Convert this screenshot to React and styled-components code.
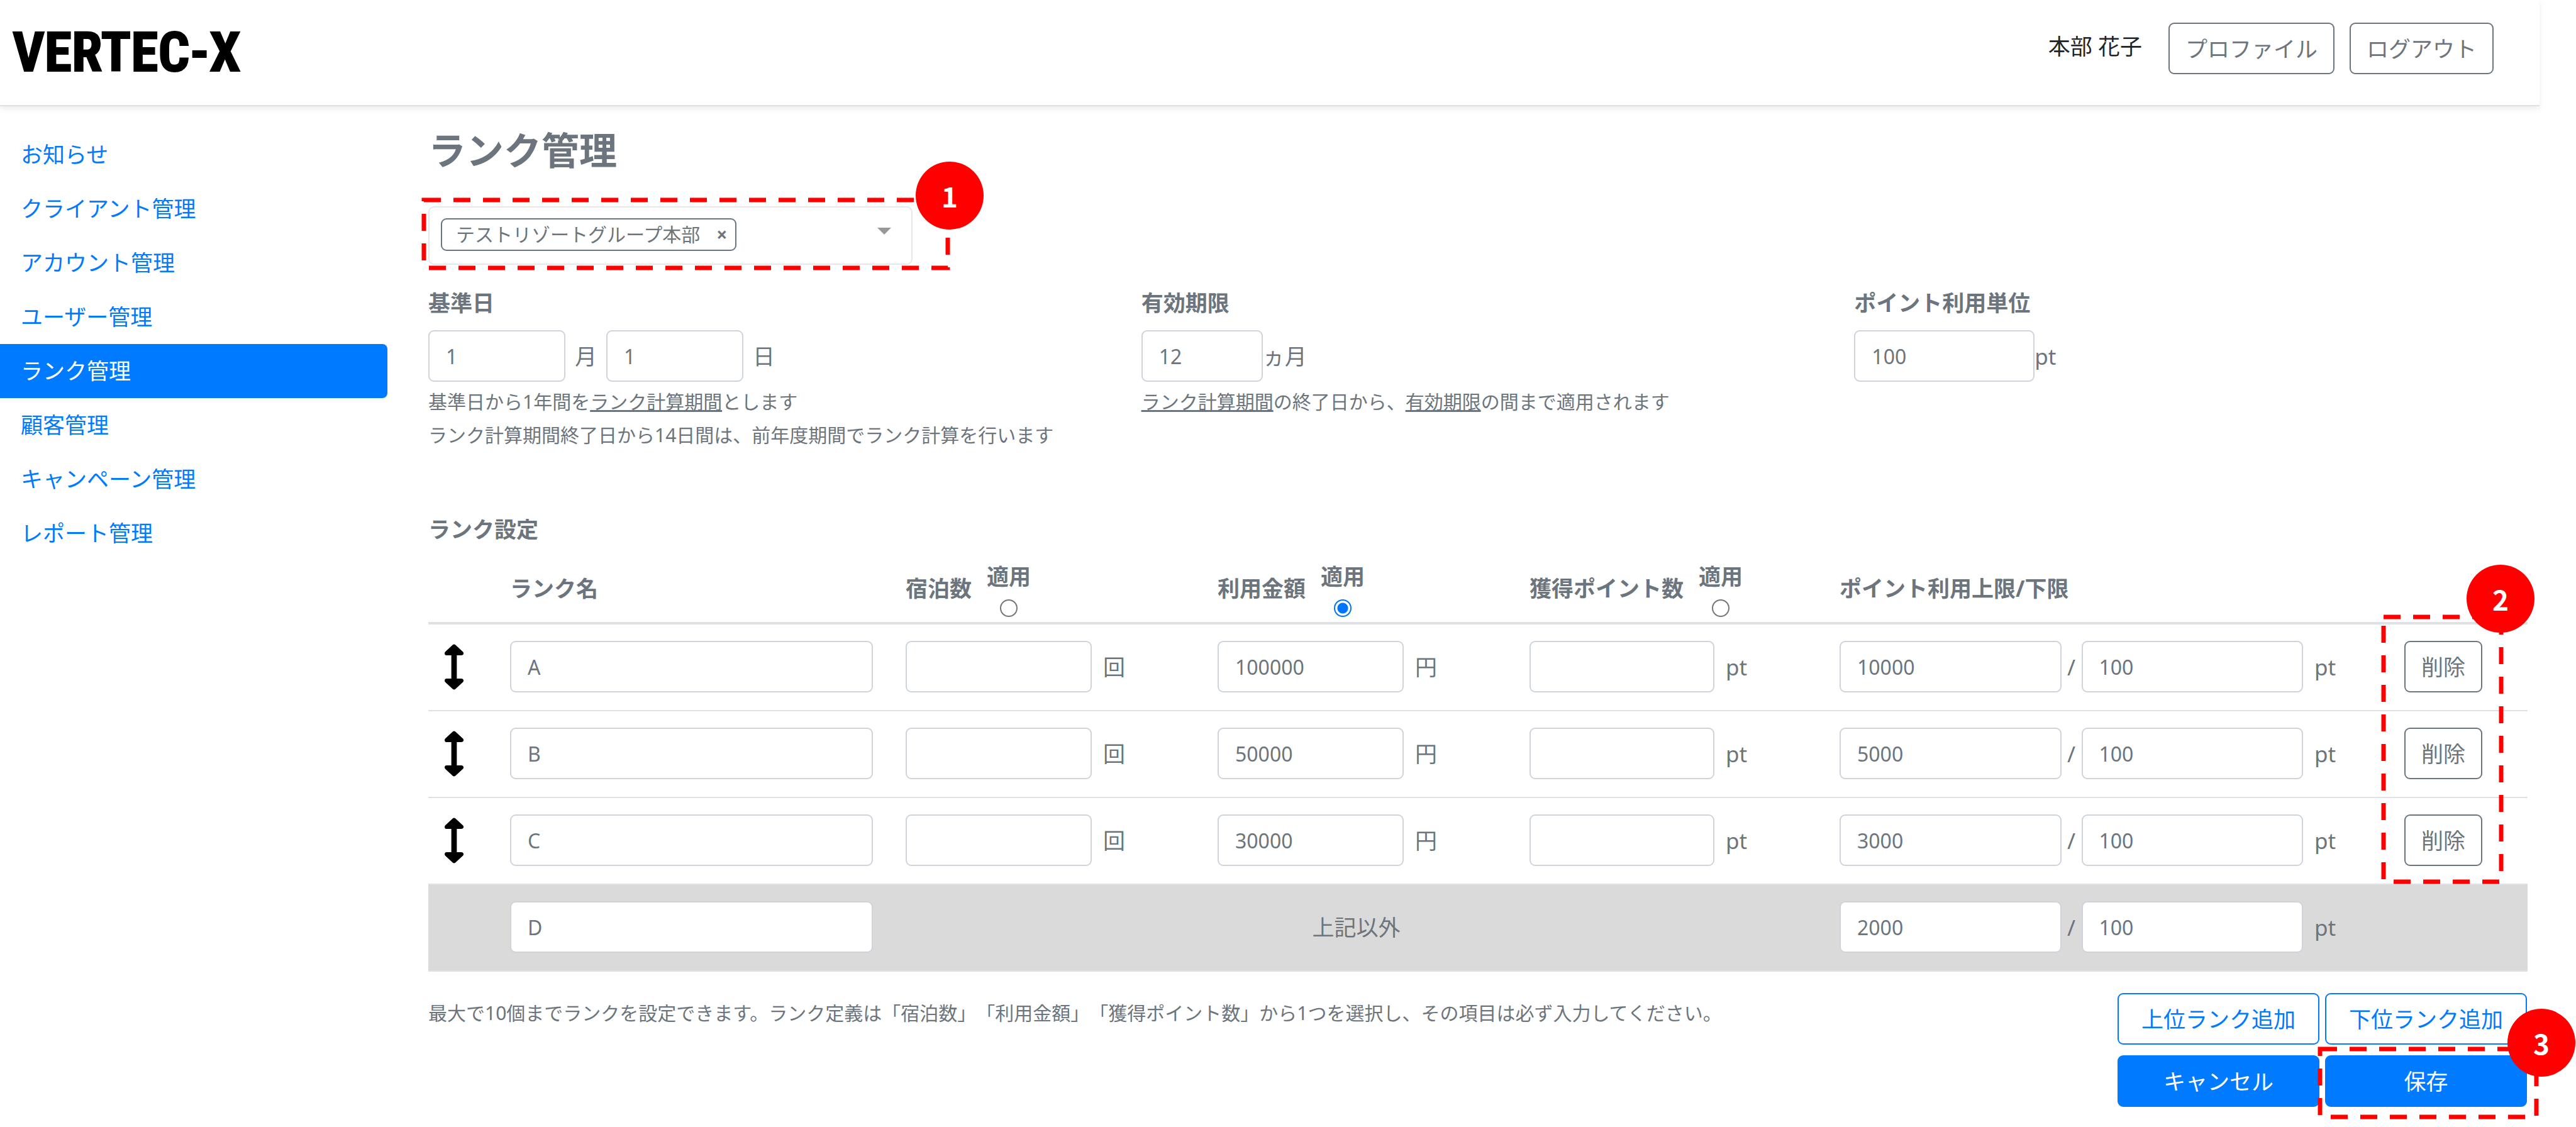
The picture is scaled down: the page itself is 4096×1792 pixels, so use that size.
import { useState } from "react";
import styled, { createGlobalStyle, css } from "styled-components";

const menu = [
  "お知らせ",
  "クライアント管理",
  "アカウント管理",
  "ユーザー管理",
  "ランク管理",
  "顧客管理",
  "キャンペーン管理",
  "レポート管理",
];

const ranks = [
  { name: "A", nights: "", amount: "100000", points: "", max: "10000", min: "100" },
  { name: "B", nights: "", amount: "50000", points: "", max: "5000", min: "100" },
  { name: "C", nights: "", amount: "30000", points: "", max: "3000", min: "100" },
];

const criteria = [
  { id: "nights", label: "宿泊数", unit: "回" },
  { id: "amount", label: "利用金額", unit: "円" },
  { id: "points", label: "獲得ポイント数", unit: "pt" },
];

const Callout = ({ number, area, badge }) => (
  <>
    <Frame $area={area}>
      <svg width="100%" height="100%" aria-hidden="true">
        <rect width="100%" height="100%" />
      </svg>
    </Frame>
    <Badge $pos={badge}>{number}</Badge>
  </>
);

const SortArrow = () => (
  <svg width="30" height="75" viewBox="0 0 31 76" aria-hidden="true">
    <g stroke="#000" strokeWidth="7" strokeLinejoin="round">
      <path d="M15.5 4.5 27.5 15.5h-24z" />
      <path d="M15.5 71.5 27.5 60.5h-24z" />
    </g>
    <path d="M11 15h9v46h-9z" />
  </svg>
);

const LimitFields = ({ rank }) => (
  <CellRow>
    <LimitInput defaultValue={rank.max} aria-label={`${rank.name} ポイント利用上限`} />
    <Slash>/</Slash>
    <LimitInput defaultValue={rank.min} aria-label={`${rank.name} ポイント利用下限`} />
    <CellUnit>pt</CellUnit>
  </CellRow>
);

const App = () => {
  const [applied, setApplied] = useState("amount");

  return (
    <>
      <GlobalStyle />
      <Page>
        <Header>
          <Logo href="#">VERTEC-X</Logo>
          <UserName>本部 花子</UserName>
          <Button type="button">プロファイル</Button>
          <Button type="button">ログアウト</Button>
        </Header>

        <Content>
          {/* Side menu */}
          <Sidebar>
            {menu.map((item) => (
              <MenuLink key={item} href="#" $active={item === "ランク管理"}>
                {item}
              </MenuLink>
            ))}
          </Sidebar>

          <Main>
            <Title>ランク管理</Title>

            {/* Group select */}
            <GroupSelect>
              <Tag>
                テストリゾートグループ本部
                <RemoveButton type="button" aria-label="削除">×</RemoveButton>
              </Tag>
              <Caret />
              <Callout
                number="1"
                area="-12px -58px -7px -9px"
                badge="top: -73px; right: -115px;"
              />
            </GroupSelect>

            {/* Base settings */}
            <Settings>
              <div>
                <FieldLabel htmlFor="month">基準日</FieldLabel>
                <FieldRow $gap="15px">
                  <DateInput id="month" defaultValue="1" />
                  <Unit>月</Unit>
                  <DateInput defaultValue="1" aria-label="日" />
                  <Unit>日</Unit>
                </FieldRow>
                <Help>
                  基準日から1年間を<u>ランク計算期間</u>とします
                  <br />
                  ランク計算期間終了日から14日間は、前年度期間でランク計算を行います
                </Help>
              </div>
              <div>
                <FieldLabel htmlFor="expiry">有効期限</FieldLabel>
                <FieldRow $gap="0">
                  <ExpiryInput id="expiry" defaultValue="12" />
                  <Unit>ヵ月</Unit>
                </FieldRow>
                <Help>
                  <u>ランク計算期間</u>の終了日から、<u>有効期限</u>の間まで適用されます
                </Help>
              </div>
              <div>
                <FieldLabel htmlFor="unit">ポイント利用単位</FieldLabel>
                <FieldRow $gap="0">
                  <PointInput id="unit" defaultValue="100" />
                  <Unit>pt</Unit>
                </FieldRow>
              </div>
            </Settings>

            {/* Rank table */}
            <SectionTitle>ランク設定</SectionTitle>
            <Table>
              <colgroup>
                <Col $w={104} />
                <Col $w={629} />
                <Col $w={496} />
                <Col $w={496} />
                <Col $w={493} />
                <Col $w={898} />
                <Col $w={222} />
              </colgroup>
              <thead>
                <tr>
                  <Th />
                  <Th>ランク名</Th>
                  {criteria.map(({ id, label }) => (
                    <Th key={id}>
                      <HeadCell>
                        {label}
                        <Apply>
                          適用
                          <Radio
                            name="apply"
                            checked={applied === id}
                            onChange={() => setApplied(id)}
                          />
                        </Apply>
                      </HeadCell>
                    </Th>
                  ))}
                  <Th>ポイント利用上限/下限</Th>
                  <Th />
                </tr>
              </thead>
              <tbody>
                {ranks.map((rank, i) => (
                  <Row key={rank.name}>
                    <Td>
                      <Handle>
                        <SortArrow />
                      </Handle>
                    </Td>
                    <Td>
                      <Input defaultValue={rank.name} aria-label="ランク名" />
                    </Td>
                    {criteria.map(({ id, label, unit }) => (
                      <Td key={id}>
                        <CellRow>
                          <CriteriaInput defaultValue={rank[id]} aria-label={`${rank.name} ${label}`} />
                          <CellUnit>{unit}</CellUnit>
                        </CellRow>
                      </Td>
                    ))}
                    <Td>
                      <LimitFields rank={rank} />
                    </Td>
                    <Td>
                      <DeleteCell>
                        <Button type="button">削除</Button>
                        {i === 0 && (
                          <Callout
                            number="2"
                            area="-38px -30px -301px -33px"
                            badge="top: -121px; right: -83px;"
                          />
                        )}
                      </DeleteCell>
                    </Td>
                  </Row>
                ))}
                <OtherRow>
                  <Td />
                  <Td>
                    <Input defaultValue="D" aria-label="ランク名" />
                  </Td>
                  <Td colSpan={3}>上記以外</Td>
                  <Td>
                    <LimitFields rank={{ name: "D", max: "2000", min: "100" }} />
                  </Td>
                  <Td />
                </OtherRow>
              </tbody>
            </Table>

            {/* Notes and actions */}
            <Footer>
              <Note>
                最大で10個までランクを設定できます。ランク定義は「宿泊数」「利用金額」「獲得ポイント数」から1つを選択し、その項目は必ず入力してください。
              </Note>
              <Actions>
                <OutlineButton type="button">上位ランク追加</OutlineButton>
                <OutlineButton type="button">下位ランク追加</OutlineButton>
                <PrimaryButton type="button">キャンセル</PrimaryButton>
                <SaveBox>
                  <PrimaryButton type="submit">保存</PrimaryButton>
                  <Callout
                    number="3"
                    area="-10px -15px -16px -8px"
                    badge="top: -74px; right: -77px;"
                  />
                </SaveBox>
              </Actions>
            </Footer>
          </Main>
        </Content>
      </Page>
    </>
  );
};

export default App;

const GlobalStyle = createGlobalStyle`
  *, *::before, *::after {
    box-sizing: border-box;
  }
  body {
    margin: 0;
    background: #fff;
    color: #6c757d;
    font-family: "Noto Sans", "Noto Sans CJK JP", sans-serif;
    font-size: 35px;
    line-height: 51px;
    text-spacing-trim: space-all;
    overflow-x: hidden;
  }
  button, input {
    font: inherit;
    color: inherit;
  }
`;

const Page = styled.div`
  padding-right: 58px;
`;

const Header = styled.header`
  display: flex;
  align-items: center;
  gap: 24px;
  padding: 36px 73px 49px 20px;
  border-bottom: 2px solid #dee2e6;
  box-shadow: 0 4px 9px rgba(0, 0, 0, 0.08);
`;

const Logo = styled.a`
  margin: 12px auto 0 0;
  color: #000;
  font-family: "Roboto Condensed", "Liberation Sans Narrow", Roboto, sans-serif;
  font-size: 88px;
  font-weight: 700;
  line-height: 70px;
  text-decoration: none;
  -webkit-text-stroke: 2px #000;
`;

const UserName = styled.span`
  margin: 0 18px 8px 0;
  color: #212529;
`;

const Button = styled.button`
  height: 82px;
  padding: 0 25px;
  border: 2px solid #6c757d;
  border-radius: 9px;
  background: #fff;
  line-height: 51px;
  white-space: nowrap;
  cursor: pointer;
`;

const OutlineButton = styled(Button)`
  width: 100%;
  border-color: #007bff;
  color: #007bff;
`;

const PrimaryButton = styled(OutlineButton)`
  background: #007bff;
  color: #fff;
`;

const Content = styled.div`
  display: flex;
  align-items: flex-start;
`;

const Sidebar = styled.nav`
  flex: 0 0 616px;
  padding-top: 34px;
`;

const MenuLink = styled.a`
  display: block;
  height: 86px;
  padding: 0 33px;
  border-radius: 0 8px 8px 0;
  color: #007bff;
  line-height: 86px;
  text-decoration: none;
  ${({ $active }) =>
    $active &&
    css`
      background: #007bff;
      color: #fff;
    `}
`;

const Main = styled.main`
  flex: 1;
  min-width: 0;
  padding: 34px 20px 30px 65px;
`;

const Title = styled.h1`
  margin: 0 0 53px;
  font-size: 60px;
  font-weight: 700;
  line-height: 72px;
`;

const GroupSelect = styled.div`
  position: relative;
  display: flex;
  align-items: center;
  justify-content: space-between;
  width: 770px;
  height: 93px;
  padding: 0 32px 4px 18px;
  border: 2px solid #e8e8e8;
  border-radius: 9px;
`;

const Tag = styled.span`
  display: flex;
  align-items: center;
  gap: 26px;
  height: 52px;
  padding: 0 13px 0 22px;
  border: 2px solid #6c757d;
  border-radius: 9px;
  font-size: 30px;
  line-height: 48px;
`;

const RemoveButton = styled.button`
  padding: 0;
  border: 0;
  background: none;
  font-weight: 700;
  line-height: 48px;
`;

const Caret = styled.span`
  margin-bottom: 10px;
  border: 11px solid transparent;
  border-top-color: #999;
  border-bottom-width: 0;
`;

const Frame = styled.div`
  position: absolute;
  inset: ${({ $area }) => $area};
  pointer-events: none;

  svg {
    display: block;
    overflow: visible;
  }

  rect {
    fill: none;
    stroke: #f00;
    stroke-width: 7px;
    stroke-dasharray: 27 20;
  }
`;

const Badge = styled.span`
  position: absolute;
  ${({ $pos }) => $pos}
  width: 108px;
  height: 108px;
  border-radius: 50%;
  background: #f00;
  color: #fff;
  font-family: "Noto Sans CJK JP", sans-serif;
  font-size: 44px;
  font-weight: 700;
  line-height: 108px;
  text-align: center;
`;

const Settings = styled.div`
  display: grid;
  grid-template-columns: repeat(3, 1fr);
  gap: 64px;
  margin-top: 35px;
`;

const FieldLabel = styled.label`
  display: block;
  margin-bottom: 18px;
  font-weight: 700;
`;

const FieldRow = styled.div`
  display: flex;
  align-items: center;
  gap: ${({ $gap }) => $gap};
`;

const Input = styled.input`
  width: 100%;
  height: 82px;
  padding: 0 26px;
  border: 2px solid #ced4da;
  border-radius: 9px;
  background: #fff;
  font-size: 32px;
`;

const DateInput = styled(Input)`
  width: 218px;
`;

const ExpiryInput = styled(Input)`
  width: 193px;
`;

const PointInput = styled(Input)`
  width: 287px;
`;

const Unit = styled.span`
  flex: none;
`;

const Help = styled.p`
  margin: 5px 0 0;
  font-size: 30px;
  line-height: 53px;
`;

const SectionTitle = styled.h2`
  margin: 98px 0 0;
  font-size: 35px;
  font-weight: 700;
  line-height: 51px;
`;

const Table = styled.table`
  width: 100%;
  table-layout: fixed;
  border-collapse: separate;
  border-spacing: 0;
`;

const Col = styled.col`
  width: ${({ $w }) => $w}px;
`;

const Th = styled.th`
  height: 126px;
  padding: 23px 26px 8px;
  border-bottom: 4px solid #dee2e6;
  text-align: left;
  white-space: nowrap;
`;

const HeadCell = styled.div`
  display: flex;
  align-items: center;
  gap: 24px;
`;

const Apply = styled.label`
  display: flex;
  flex-direction: column;
  align-items: center;
  gap: 11px;
`;

const Radio = styled.input.attrs({ type: "radio" })`
  appearance: none;
  width: 28px;
  height: 28px;
  margin: 0;
  border: 2px solid #767676;
  border-radius: 50%;
  background: #fff;

  &:checked {
    border-color: #0075ff;
    background: radial-gradient(circle, #0075ff 8px, #fff 9px);
  }
`;

const Td = styled.td`
  padding: 26px 26px 28px;
`;

const Row = styled.tr`
  & + & ${Td} {
    border-top: 2px solid #dee2e6;
  }
`;

const OtherRow = styled.tr`
  background: #dadada;
  text-align: center;

  ${Td} {
    border-top: 2px solid #dee2e6;
    border-bottom: 2px solid #dee2e6;
  }
`;

const CellRow = styled.div`
  display: flex;
  align-items: center;
`;

const CriteriaInput = styled(Input)`
  width: calc(100% * 2 / 3);
`;

const LimitInput = styled(Input)`
  width: calc(100% * 5 / 12);
`;

const Slash = styled.span`
  width: 32px;
  text-align: center;
`;

const CellUnit = styled(Unit)`
  margin-left: 18px;
`;

const Handle = styled.div`
  display: flex;
`;

const DeleteCell = styled.div`
  position: relative;
  width: max-content;
`;

const Footer = styled.div`
  display: flex;
  justify-content: space-between;
  margin-top: 34px;
`;

const Note = styled.p`
  margin: 5px 0 0;
  font-size: 30px;
  line-height: 53px;
`;

const Actions = styled.div`
  display: grid;
  grid-template-columns: 321px 321px;
  gap: 17px 9px;
`;

const SaveBox = styled.div`
  position: relative;
`;
